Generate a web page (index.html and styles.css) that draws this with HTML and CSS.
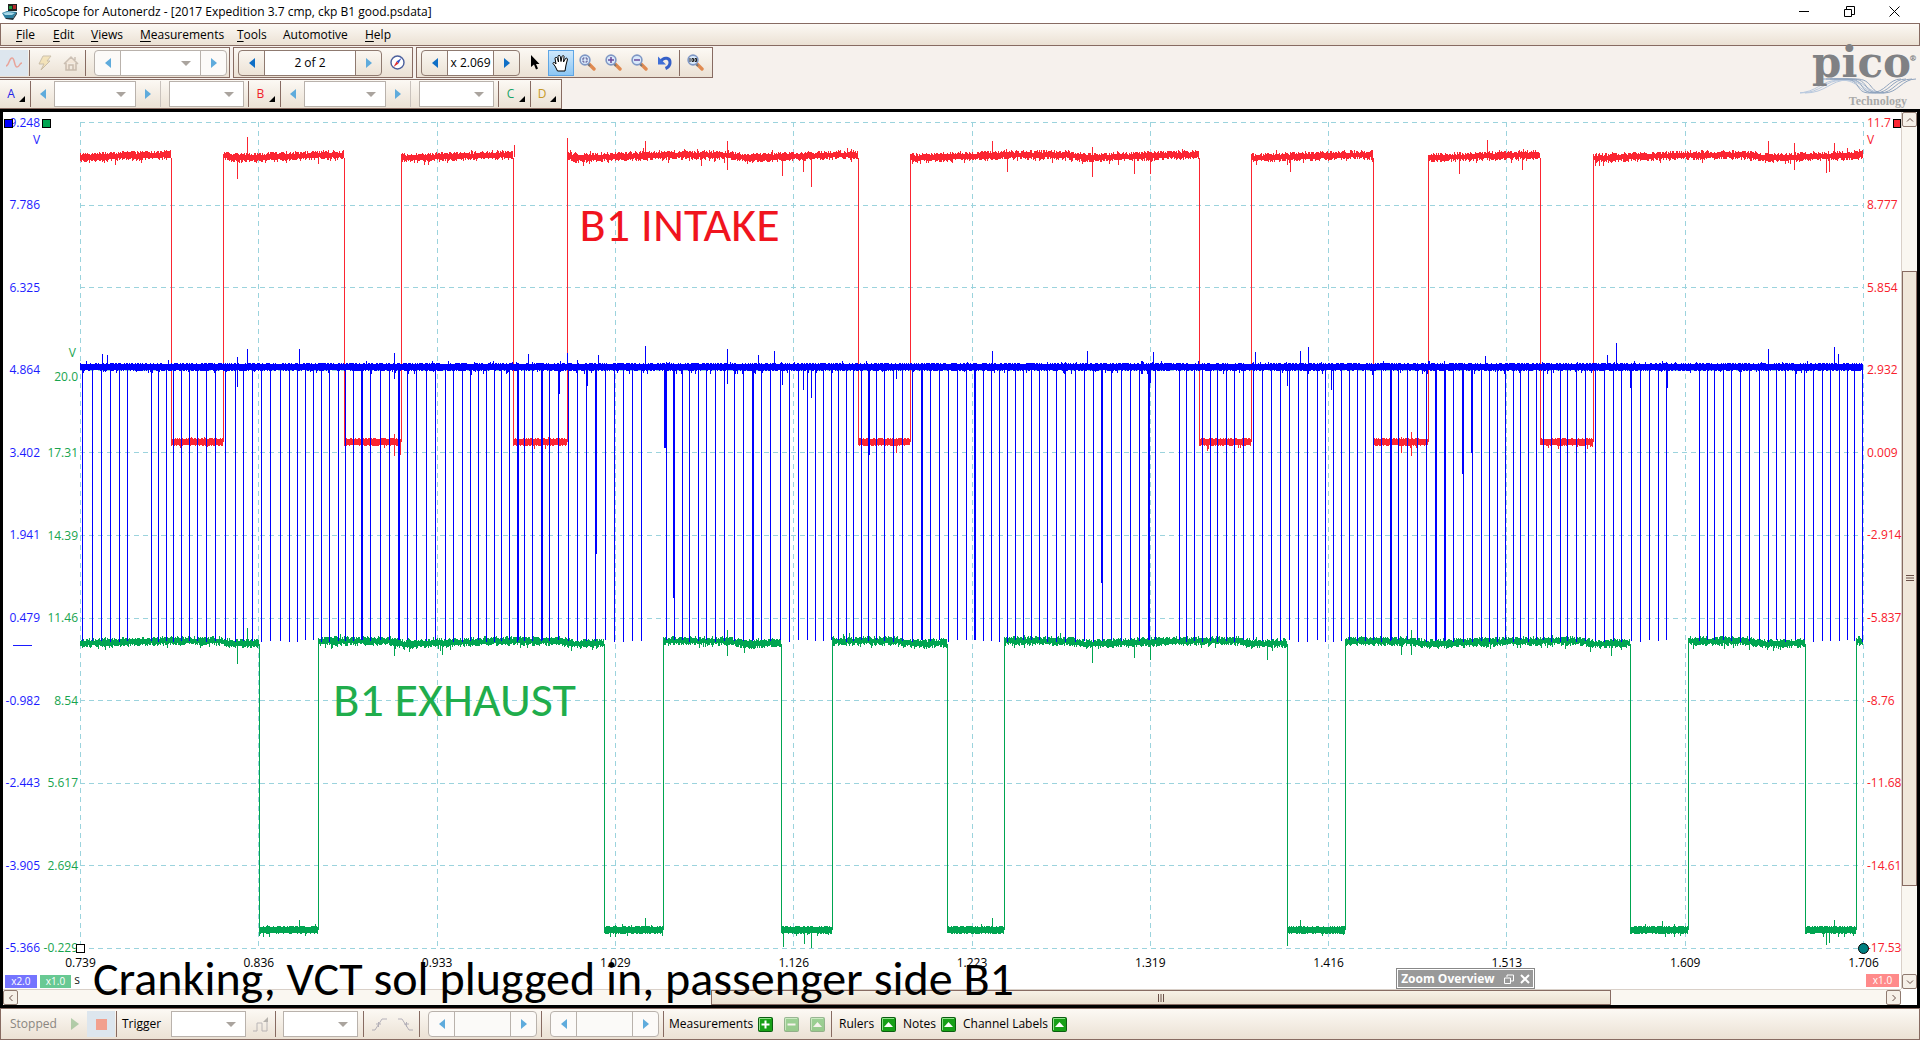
FILE: index.html
```html
<!DOCTYPE html>
<html lang="en">
<head>
<meta charset="utf-8">
<title>PicoScope for Autonerdz</title>
<link rel="stylesheet" href="styles.css">
</head>
<body>
<svg class="defs" aria-hidden="true">
  <symbol id="left" viewBox="0 0 6 10"><path d="M6 0V10L0 5Z" fill="currentColor"/></symbol>
  <symbol id="right" viewBox="0 0 6 10"><path d="M0 0V10L6 5Z" fill="currentColor"/></symbol>
  <symbol id="lens" viewBox="0 0 17 17"><path d="M9 9L15 15" stroke="#e08a50" stroke-width="3.4" stroke-linecap="round"/><path d="M8.500 9.500L11 12" stroke="#777" stroke-width="2"/><circle cx="6" cy="6" r="4.900" fill="#d9e9fb" stroke="#7f97c4" stroke-width="1.600"/></symbol>
  <symbol id="panel" viewBox="0 0 15 15"><rect x=".5" y=".5" width="14" height="14" rx="1" fill="#17a017" stroke="#0b5d10"/><path d="M1.500 13V1.500H13" fill="none" stroke="#8fe08a"/></symbol>
</svg>
<div class="window">
  <header class="titlebar">
    <svg class="app-icon" viewBox="0 0 16 17"><rect x="6" y="1" width="9" height="7" fill="#222"/><path d="M7 3h3v3H7z" fill="#1c9c3c"/><path d="M11 2h3v4h-3z" fill="#b32b2b"/><path d="M0 10L5 8L15 9L11 15L3 15Z" fill="#2d7f9f"/><path d="M1 10L6 9L13 10L10 12L3 12Z" fill="#a7d8e8"/><path d="M3 15L11 15L15 9V11L11 17L4 16Z" fill="#22333d"/></svg>
    <h1>PicoScope for Autonerdz - [2017 Expedition 3.7 cmp, ckp B1 good.psdata]</h1>
    <div class="win-buttons">
      <button aria-label="Minimize"><svg viewBox="0 0 11 11"><path d="M0 5.500H10"/></svg></button>
      <button aria-label="Restore"><svg viewBox="0 0 11 11"><path d="M.5 3.500H7.500V10.500H.5ZM2.500 3.500V.5H10.500V8.500H7.500"/></svg></button>
      <button aria-label="Close"><svg viewBox="0 0 11 11"><path d="M.5 .5L10.500 10.500M10.500 .5L.5 10.500"/></svg></button>
    </div>
  </header>

  <nav class="menu">
    <button class="m-file"><u>F</u>ile</button><button class="m-edit"><u>E</u>dit</button><button class="m-views"><u>V</u>iews</button><button class="m-meas"><u>M</u>easurements</button><button class="m-tools"><u>T</u>ools</button><button class="m-auto">Automotive</button><button class="m-help"><u>H</u>elp</button>
  </nav>

  <div class="toolbars">
    <div class="bars">
      <div class="bar-row">
        <div class="bar group-mode">
          <button class="tool lit" aria-label="Scope mode"><svg width="18" height="14" viewBox="0 0 18 14"><path d="M1 10C4 10 4 2 7 2S9 11 12 11S14 7 17 7" fill="none" stroke="#e8a49a" stroke-width="1.500"/></svg></button>
          <i class="sep"></i>
          <button class="tool faded" aria-label="Auto setup"><svg width="14" height="16" viewBox="0 0 14 16"><path d="M5 1H13L9 6H12L3 15L6 9H1Z" fill="#f2d27a" stroke="#8f7a50"/></svg></button>
          <button class="tool faded" aria-label="Home"><svg width="16" height="16" viewBox="0 0 16 16"><path d="M1 9L8 2L15 9M3 8V15H13V8M6 15V10H10V15M12 5V2" fill="#f3ddc8" stroke="#8f7a68" stroke-width="1.500"/></svg></button>
          <i class="sep"></i>
          <div class="stepper dim wide"><button aria-label="Previous range"><svg><use href="#left"/></svg></button><span class="drop"><select aria-label="Range" disabled></select></span><button aria-label="Next range"><svg><use href="#right"/></svg></button></div>
        </div>
        <div class="bar group-buffer">
          <div class="stepper buffer"><button aria-label="Previous buffer"><svg><use href="#left"/></svg></button><input aria-label="Buffer" value="2 of 2"><button class="pale" aria-label="Next buffer"><svg><use href="#right"/></svg></button></div>
          <button class="tool snug" aria-label="Buffer overview"><svg width="15" height="15" viewBox="0 0 15 15"><circle cx="7.500" cy="7.500" r="6.500" fill="#fff" stroke="#4b5f9c" stroke-width="1.400"/><path d="M11.500 3L8.500 8.500L6.500 6.500Z" fill="#3450c8"/><path d="M3.500 12L6.500 6.500L8.500 8.500Z" fill="#e03030"/></svg></button>
        </div>
        <div class="bar group-zoom">
          <div class="stepper zoom"><button aria-label="Zoom less"><svg><use href="#left"/></svg></button><input aria-label="Zoom factor" value="x 2.069"><button aria-label="Zoom more"><svg><use href="#right"/></svg></button></div>
          <button class="tool" aria-label="Select"><svg width="10" height="15" viewBox="0 0 10 15"><path d="M1 0V12L4 9.500L6 14.500L8 13.500L6 9H9.500Z"/></svg></button>
          <button class="tool picked" aria-label="Hand"><svg width="18" height="18" viewBox="0 0 18 18"><path d="M5.500 17L3 12L1 9.500C1 8 2.500 8 4 10L3 4.500C3 3 5 3 5.500 4.500L6.500 8L6 2.500C6 1 8 1 8.300 2.500L9 7.500L10 2.500C10.500 1 12.500 1.500 12 3L11.500 8L13.500 4.500C14.500 3.500 16 4.500 15.300 6L14 11L13 17Z" fill="#fff" stroke="#000"/></svg></button>
          <button class="tool" aria-label="Marquee zoom"><svg width="17" height="17" viewBox="0 0 17 17"><use href="#lens"/><path d="M4 6V4H5.500M6.500 4H8V6M8 6.500V8H6.500M5.500 8H4V6.500" fill="none" stroke="#57508a"/></svg></button>
          <button class="tool" aria-label="Zoom in"><svg width="17" height="17" viewBox="0 0 17 17"><use href="#lens"/><path d="M3 6H9M6 3V9" stroke="#6a4a9a" stroke-width="1.500"/></svg></button>
          <button class="tool" aria-label="Zoom out"><svg width="17" height="17" viewBox="0 0 17 17"><use href="#lens"/><path d="M3 6H9" stroke="#6a4a9a" stroke-width="1.500"/></svg></button>
          <button class="tool" aria-label="Undo zoom"><svg width="16" height="15" viewBox="0 0 16 15"><path d="M4 6C7 1.500 13.500 2.500 13 8C12.800 10.500 11 12.500 8.500 13.500" fill="none" stroke="#3560c8" stroke-width="3"/><path d="M1 1.500V9.500H9Z" fill="#3f6fd8"/></svg></button>
          <i class="sep"></i>
          <button class="tool" aria-label="Zoom full view"><svg width="17" height="17" viewBox="0 0 17 17"><use href="#lens"/><path d="M3 4V8M5 4.500h1.500v3H5zM8 4.500h1.500v3H8z" fill="none" stroke="#222"/></svg></button>
        </div>
      </div>
      <div class="bar-row">
        <div class="bar channels">
          <button class="chan a">A</button><i class="sep"></i>
          <div class="chan-step"><button aria-label="A range down"><svg><use href="#left"/></svg></button><span class="drop"><select aria-label="A range" disabled></select></span><button aria-label="A range up"><svg><use href="#right"/></svg></button></div>
          <span class="drop solo"><select aria-label="A coupling" disabled></select></span>
          <i class="sep"></i><button class="chan b">B</button><i class="sep"></i>
          <div class="chan-step"><button aria-label="B range down"><svg><use href="#left"/></svg></button><span class="drop"><select aria-label="B range" disabled></select></span><button aria-label="B range up"><svg><use href="#right"/></svg></button></div>
          <span class="drop solo"><select aria-label="B coupling" disabled></select></span>
          <i class="sep"></i><button class="chan c">C</button><i class="sep"></i><button class="chan d">D</button>
        </div>
      </div>
    </div>
    <div class="brand">
      <div class="brand-name">pico<sup>®</sup></div>
      <svg class="brand-wave" viewBox="0 0 116 17"><g fill="none" stroke-width="1"><g stroke="#b9c9de"><path d="M0 15C22 15 24 2 44 2S62 15 80 15"/><path d="M5 15C26 15 30 2 48 2S66 15 84 15"/><path d="M-4 15C18 15 20 2 40 2S58 15 76 15"/></g><g stroke="#8fa3bd"><path d="M30 1H52C70 1 62 15 80 15C94 15 96 1 112 1"/><path d="M26 1H48C66 1 58 15 75 15C90 15 92 1 106 1"/><path d="M34 1H56C74 1 68 15 84 15C98 15 102 1 116 1"/><path d="M22 1H44C62 1 54 15 70 15C86 15 88 1 101 1"/></g></g></svg>
      <div class="brand-sub">Technology</div>
    </div>
  </div>

  <main class="scope">
    <div class="view">
      <div class="axes">
        <ol class="axis blue"><li>9.248</li><li>7.786</li><li>6.325</li><li>4.864</li><li>3.402</li><li>1.941</li><li>0.479</li><li>-0.982</li><li>-2.443</li><li>-3.905</li><li>-5.366</li></ol>
        <div class="green-side">
          <div class="green-head"><span class="unit">V</span><span>20.0</span></div>
          <ol class="axis green"><li>17.31</li><li>14.39</li><li>11.46</li><li>8.54</li><li>5.617</li><li>2.694</li><li>-0.229</li></ol>
        </div>
        <span class="chip chip-blue"></span><span class="chip chip-green"></span>
        <span class="unit unit-blue">V</span><span class="zero-mark"></span>
      </div>
      <div class="chart">
        <svg id="traces" viewBox="80 122 1784 827" preserveAspectRatio="none" role="img" aria-label="Channel traces">
          <g id="grid"></g>
          <path id="intake" stroke="#fb2532"/>
          <path id="exhaust" stroke="#00a551"/>
          <path id="crank" stroke="#0000ff"/>
        </svg>
        <span class="handle-box"></span><span class="handle-dot"></span>
        <p class="note intake">B1 INTAKE</p>
        <p class="note exhaust">B1 EXHAUST</p>
        <p class="note caption">Cranking, VCT sol plugged in, passenger side B1</p>
      </div>
      <div class="axes-right">
        <ol class="axis red"><li>11.7</li><li>8.777</li><li>5.854</li><li>2.932</li><li>0.009</li><li>-2.914</li><li>-5.837</li><li>-8.76</li><li>-11.68</li><li>-14.61</li><li>-17.53</li></ol>
        <span class="chip chip-red"></span><span class="unit unit-red">V</span>
      </div>
      <div class="scales"><span class="scale blue-bg">x2.0</span><span class="scale green-bg">x1.0</span><span>s</span></div>
      <ol class="times"><li>0.739</li><li>0.836</li><li>0.933</li><li>1.029</li><li>1.126</li><li>1.223</li><li>1.319</li><li>1.416</li><li>1.513</li><li>1.609</li><li>1.706</li></ol>
      <div class="scales end"><span class="scale red-bg">x1.0</span></div>
      <div class="overview"><strong>Zoom Overview</strong>
        <button aria-label="Restore overview"><svg width="10" height="10" viewBox="0 0 10 10"><path d="M.5 4H6.500V9.500H.5ZM3 3V1H9.500V7H7" /></svg></button>
        <button aria-label="Close overview"><svg width="10" height="10" viewBox="0 0 10 10"><path d="M1 1L9 9M9 1L1 9" stroke-width="2"/></svg></button>
      </div>
    </div>
    <div class="scroll v">
      <button aria-label="Scroll up"><svg viewBox="0 0 8 8"><path d="M1 5.500L4 2.500L7 5.500"/></svg></button>
      <div class="track"><div class="thumb"><svg viewBox="0 0 8 8"><path d="M0 1.500H8M0 4H8M0 6.500H8"/></svg></div></div>
      <button aria-label="Scroll down"><svg viewBox="0 0 8 8"><path d="M1 2.500L4 5.500L7 2.500"/></svg></button>
    </div>
    <div class="scroll h">
      <button aria-label="Scroll left"><svg viewBox="0 0 8 8"><path d="M5.500 1L2.500 4L5.500 7"/></svg></button>
      <div class="track"><div class="thumb"><svg viewBox="0 0 8 8"><path d="M1.500 0V8M4 0V8M6.500 0V8"/></svg></div></div>
      <button aria-label="Scroll right"><svg viewBox="0 0 8 8"><path d="M2.500 1L5.500 4L2.500 7"/></svg></button>
    </div>
  </main>

  <footer class="bar status">
    <span class="state">Stopped</span>
    <button class="tool faded play" aria-label="Start"><svg width="8" height="12" viewBox="0 0 8 12"><path d="M0 0V12L8 6Z" fill="#4f9a4f"/></svg></button>
    <button class="tool lit" aria-label="Stop"><svg width="11" height="11" viewBox="0 0 11 11"><path d="M0 0H11V11H0Z" fill="#f2a08e"/></svg></button>
    <i class="sep"></i>
    <label class="trigger" for="trigger">Trigger</label>
    <span class="drop solo"><select id="trigger" disabled></select></span>
    <button class="tool faded" aria-label="Advanced trigger"><svg width="17" height="15" viewBox="0 0 17 15"><path d="M0 14H4V6H9V14H14V3" fill="none" stroke="#667"/><path d="M10 5L15 5V0Z" fill="#555"/></svg></button>
    <i class="sep"></i>
    <span class="drop solo"><select aria-label="Trigger channel" disabled></select></span>
    <i class="sep"></i>
    <button class="tool faded" aria-label="Rising edge"><svg width="15" height="13" viewBox="0 0 15 13"><path d="M0 12H3L10 1H15M4 6H9M6.500 4V9" fill="none" stroke="#557"/></svg></button>
    <button class="tool faded" aria-label="Falling edge"><svg width="15" height="13" viewBox="0 0 15 13"><path d="M0 1H4L11 12H15M6 6H11M8.500 4V9" fill="none" stroke="#557"/></svg></button>
    <i class="sep"></i>
    <div class="stepper dim low"><button aria-label="Threshold down"><svg><use href="#left"/></svg></button><input aria-label="Threshold" disabled><button aria-label="Threshold up"><svg><use href="#right"/></svg></button></div>
    <i class="sep"></i>
    <div class="stepper dim low"><button aria-label="Pre-trigger down"><svg><use href="#left"/></svg></button><input aria-label="Pre-trigger" disabled><button aria-label="Pre-trigger up"><svg><use href="#right"/></svg></button></div>
    <i class="sep"></i>
    <span class="lbl lbl-meas">Measurements</span>
    <button class="tool" aria-label="Add measurement"><svg width="15" height="15" viewBox="0 0 15 15"><use href="#panel"/><path d="M3.500 7.500H11.500M7.500 3.500V11.500" stroke="#fff" stroke-width="2"/></svg></button>
    <button class="tool faded" aria-label="Remove measurement"><svg width="15" height="15" viewBox="0 0 15 15"><use href="#panel"/><path d="M3.500 7.500H11.500" stroke="#fff" stroke-width="2"/></svg></button>
    <button class="tool faded" aria-label="Edit measurement"><svg width="15" height="15" viewBox="0 0 15 15"><use href="#panel"/><path d="M3 10L7.500 5L12 10Z" fill="#fff"/></svg></button>
    <i class="sep"></i>
    <span class="lbl lbl-rulers">Rulers</span><button class="tool tight" aria-label="Rulers"><svg width="15" height="15" viewBox="0 0 15 15"><use href="#panel"/><path d="M3 10L7.500 5L12 10Z" fill="#fff"/></svg></button>
    <span class="lbl lbl-notes">Notes</span><button class="tool tight" aria-label="Notes"><svg width="15" height="15" viewBox="0 0 15 15"><use href="#panel"/><path d="M3 10L7.500 5L12 10Z" fill="#fff"/></svg></button>
    <span class="lbl lbl-chan">Channel Labels</span><button class="tool tight" aria-label="Channel Labels"><svg width="15" height="15" viewBox="0 0 15 15"><use href="#panel"/><path d="M3 10L7.500 5L12 10Z" fill="#fff"/></svg></button>
  </footer>
</div>
<script src="traces.js"></script>
</body>
</html>
```

FILE: traces.js
```js
// Plot space: x 80..1864, y 122..949
const X0 = 80, X1 = 1863, Y0 = 122, Y1 = 948;
let seed = 20173;
const rnd = () => (seed = (seed * 16807) % 2147483647) / 2147483647;

// Small supply ripple: slow rise, then a quick drop with every compression
function ripple(x) {
  const p = ((x - 235 + 1700) % 170) / 170;
  return p < 0.55 ? -3 * p / 0.55 : p < 0.9 ? -3 : -3 * (1 - p) / 0.1;
}

function band(from, to, mid, half, spread, wobble) {
  let d = '';
  for (let x = Math.round(from); x < to; x++) {
    const c = mid + (wobble ? ripple(x) : 0);
    const long = rnd() < 0.08 ? rnd() * 4 : 0;
    const tall = rnd() < 0.04 ? rnd() * 3 : 0;
    d += `M${x}.5 ${Math.round(c - half - rnd() * spread - tall)}V${Math.round(c + half + rnd() * spread + long)}`;
  }
  return d;
}

function square(edges, high, low) {
  let d = '', x = X0, up = true;
  for (const e of [...edges, X1]) {
    d += up ? band(x, e, high, 2, 3, true) : band(x, e, low, 3, 1, false);
    if (e !== X1) d += `M${Math.floor(e)}.5 ${high}V${low}`;
    x = e; up = !up;
  }
  return d;
}

const spikes = list => list.map(([x, a, b]) => `M${x}.5 ${a}V${b}`).join('');

const intake = [171, 223, 344, 401, 513, 567, 858, 910, 1199, 1251, 1373, 1428, 1540, 1593];
const exhaust = [259, 318, 604, 663, 781, 832, 947, 1004, 1287, 1345, 1630, 1688, 1805, 1856];

const teeth = [82, 92, 101, 110, 119, 127, 151, 158, 166, 173, 181, 189, 197, 206, 215, 225, 235, 243, 252,
  261, 270, 280, 289, 297, 305, 313, 321, 329, 338, 345, 353, 361, 370, 380, 389, 398, 407, 416, 426, 435,
  445, 453, 462, 470, 478, 486, 494, 501, 509, 517, 524, 532, 541, 549, 558, 568, 577, 586, 595, 605, 614,
  623, 632, 641, 666, 674, 682, 689, 698, 706, 715, 724, 734, 743, 752, 761, 770, 780, 789, 798, 807, 815,
  823, 831, 838, 846, 853, 861, 868, 876, 884, 893, 902, 912, 921, 930, 939, 948, 957, 966, 974, 983, 991,
  999, 1007, 1015, 1023, 1031, 1039, 1047, 1056, 1065, 1075, 1084, 1093, 1102, 1111, 1121, 1130, 1139, 1148,
  1155, 1179, 1186, 1194, 1202, 1210, 1217, 1226, 1234, 1243, 1253, 1262, 1271, 1280, 1289, 1298, 1307,
  1317, 1325, 1333, 1341, 1349, 1357, 1365, 1373, 1381, 1390, 1398, 1407, 1417, 1426, 1435, 1444, 1453,
  1463, 1472, 1481, 1489, 1497, 1505, 1513, 1520, 1528, 1536, 1543, 1551, 1560, 1567, 1576, 1585, 1595,
  1604, 1613, 1621, 1631, 1640, 1649, 1658, 1666, 1699, 1707, 1714, 1723, 1731, 1740, 1749, 1759, 1768,
  1776, 1785, 1795, 1804, 1813, 1822, 1830, 1839, 1847, 1854, 1862];
const wide = [361, 398, 517, 541, 752, 921, 974, 1148, 1390, 1435, 1444];

document.getElementById('intake').setAttribute('d', square(intake, 158, 442) + spikes([
  [237, 157, 179], [247, 137, 157], [514, 145, 157], [567, 138, 157],
  [583, 157, 166], [645, 141, 157], [701, 157, 166], [727, 141, 170], [782, 157, 176], [803, 157, 172],
  [811, 157, 187], [992, 141, 157], [1007, 157, 172], [1092, 147, 177], [1134, 157, 174], [1150, 157, 174],
  [1290, 157, 172], [1459, 157, 174], [1487, 140, 157], [1522, 157, 170], [1768, 141, 157],
  [1794, 143, 170], [1826, 157, 173], [1829, 157, 172], [1834, 143, 157],
  [394, 434, 456], [400, 442, 455], [896, 442, 453], [1207, 442, 451], [1401, 442, 453], [1411, 432, 456]]));

document.getElementById('exhaust').setAttribute('d', square(exhaust, 644, 930) + spikes([
  [237, 644, 664], [247, 628, 644], [394, 644, 656], [442, 644, 655], [727, 630, 656], [744, 644, 653],
  [1092, 644, 663], [1134, 644, 658], [1150, 644, 660], [1267, 644, 660], [1401, 644, 655], [1411, 630, 655],
  [1611, 644, 656], [1795, 630, 644], [299, 920, 930], [645, 918, 930], [783, 930, 947], [804, 930, 944],
  [811, 930, 948], [992, 918, 930], [1287, 930, 946], [1300, 920, 930], [1662, 921, 930],
  [1826, 930, 945], [1829, 930, 943], [1834, 920, 930]]));

let crank = band(X0, X1, 367, 3, 1, false);
for (const x of teeth) {
  crank += `M${x}.5 367V${640 + Math.floor(rnd() * 3)}`;
  if (wide.includes(x)) crank += `M${x + 1}.5 367V640`;
}
crank += spikes([[596, 367, 554], [665, 367, 448], [664, 367, 448], [673, 367, 598], [869, 367, 455],
  [1101, 367, 583], [1462, 367, 474], [1471, 367, 453], [102, 354, 367], [107, 355, 367], [237, 357, 387],
  [247, 349, 367], [299, 349, 367], [394, 353, 379], [528, 354, 367], [559, 367, 394], [567, 353, 367],
  [587, 367, 386], [598, 355, 367], [645, 346, 367], [727, 349, 384], [758, 355, 367], [774, 351, 367],
  [782, 367, 385], [803, 367, 390], [811, 367, 398], [896, 367, 379], [992, 351, 367], [1087, 351, 367],
  [1150, 367, 383], [1153, 352, 367], [1255, 352, 367], [1287, 367, 386], [1300, 351, 367], [1308, 347, 367],
  [1331, 367, 390], [1485, 356, 367], [1607, 355, 367], [1616, 343, 367], [1630, 367, 388], [1667, 367, 388],
  [1768, 349, 367], [1834, 347, 367], [1838, 354, 367]]);
document.getElementById('crank').setAttribute('d', crank);

let grid = '';
for (let i = 0; i <= 10; i++) {
  const x = Math.round(X0 + i * (X1 - X0) / 10), y = Math.round(Y0 + i * (Y1 - Y0) / 10);
  grid += `<path d="M${x}.5 ${Y0}V${Y1}"/><path d="M${X0} ${y}.5H${X1}"/>`;
}
document.getElementById('grid').innerHTML = grid;
```

FILE: styles.css
```css
* { box-sizing: border-box; }
body { margin: 0; background: #fff; color: #000; font: 12px/16px "Open Sans", "Noto Sans", sans-serif; }
button, input, select { font: inherit; color: inherit; margin: 0; padding: 0; border: 0; background: none; border-radius: 0; appearance: none; min-width: 0; }
button { display: flex; align-items: center; justify-content: center; }
ol { list-style: none; margin: 0; padding: 0; }
p, h1 { margin: 0; font: inherit; }
.defs { position: absolute; width: 0; height: 0; }
.window { display: flex; flex-direction: column; height: 100vh; min-height: 600px; overflow: hidden; }

.titlebar { display: flex; align-items: center; height: 23px; padding-left: 2px; flex: none; }
.app-icon { width: 16px; height: 17px; margin-right: 5px; }
.titlebar h1 { flex: 1; }
.win-buttons { display: flex; padding-right: 3px; }
.win-buttons button { width: 45px; height: 22px; }
.win-buttons svg { width: 11px; height: 11px; fill: none; stroke: #000; }

.menu, .bar { background: linear-gradient(#fcf9f4, #ebe1d4); }
.menu { display: flex; height: 23px; flex: none; border: 1px solid #876b62; padding-left: 15px; }
.menu button { justify-content: flex-start; white-space: nowrap; text-underline-offset: 2px; }
.m-file { width: 37px; }
.m-edit { width: 38px; }
.m-views { width: 49px; }
.m-meas { width: 97px; }
.m-tools { width: 46px; }
.m-auto { width: 82px; }

.toolbars { display: flex; justify-content: space-between; height: 63px; flex: none; background: #f6f1ed; }
.bars { display: flex; flex-direction: column; gap: 1px; padding-top: 1px; }
.bar-row { display: flex; gap: 3px; }
.bar { display: flex; align-items: center; height: 31px; border: 1px solid #876b62; }
.bar-row + .bar-row .bar { height: 30px; border-left: 0; }
.group-mode { width: 230px; border-left: 0; }
.group-buffer { width: 180px; padding-left: 4px; }
.group-zoom { width: 297px; padding-left: 4px; }
.sep { width: 1px; height: 26px; background: #876b62; flex: none; margin: 0 2px 0 1px; }
.tool { width: 26px; height: 26px; flex: none; }
.tool.lit { width: 28px; background: #dde6ee; }
.tool.picked { background: linear-gradient(#cfe8fb, #8cc6f4); border: 1px solid #5ea5e4; }
.tool.snug { width: 30px; }
.tool.tight { width: 15px; margin: 0 7px 0 0; }
.faded { opacity: .4; }
.stepper { display: flex; height: 26px; border: 1px solid #8f7a70; border-radius: 4px; overflow: hidden; flex: none; }
.stepper button { width: 25px; color: #0f6fc6; flex: none; }
.stepper svg, .chan-step svg { width: 6px; height: 10px; }
.stepper input { flex: 1; width: 0; text-align: center; background: #fff; border: solid #8f7a70; border-width: 0 1px; }
.stepper .drop { flex: 1; border-width: 0 1px; height: 24px; }
.stepper.dim { border-color: #b9b2ac; background: #fcfaf8; }
.stepper.dim input { background: #fbfaf8; border-color: #b9b2ac; }
.dim button, .stepper .pale, .chan-step button { color: #5fabdc; }
.wide { width: 133px; margin-left: 6px; }
.buffer { width: 144px; }
.zoom { width: 99px; margin-right: 2px; }
.low { width: 109px; margin: 0 3px 0 6px; }
.drop { position: relative; display: block; height: 26px; border: 1px solid #b9b2ac; background: #fff; flex: none; }
.drop select { width: 100%; height: 100%; display: block; opacity: 1; }
.drop::after { content: ""; position: absolute; right: 9px; top: 50%; margin-top: -2px; border: 5px solid transparent; border-top-color: #aaa49e; border-bottom: 0; }
.drop.solo { width: 75px; }
.channels { width: 562px; }
.channels .sep { margin: 0; }
.chan { width: 30px; height: 28px; padding-right: 8px; position: relative; }
.chan::after { content: ""; position: absolute; right: 5px; bottom: 6px; border: solid transparent; border-width: 3px; border-right-color: #000; border-bottom-color: #000; }
.a { color: #2323e8; } .b { color: #f01c28; width: 31px; } .c { color: #18a468; width: 31px; } .d { color: #c79a28; }
.chan-step { display: flex; width: 130px; height: 26px; margin-right: 8px; border-right: 1px solid #c9c2bc; }
.chan-step button { width: 23px; flex: none; }
.chan-step .drop { width: 82px; }
.channels .solo { margin-right: 4px; }

.brand { width: 120px; margin-right: 4px; display: flex; flex-direction: column; align-items: flex-end; color: #808184; font-family: "DejaVu Serif", serif; }
.brand-name { font-size: 42px; font-weight: bold; line-height: 34px; height: 32px; position: relative; margin-right: 5px; }
.brand-name sup { position: absolute; right: -6px; top: 8px; font-size: 8px; line-height: 8px; }
.brand-wave { width: 116px; height: 17px; overflow: hidden; }
.brand-sub { font: bold 12px/12px "Liberation Serif", serif; color: #a9a9a9; margin-right: 9px; }

.scope { flex: 1; min-height: 0; display: grid; grid-template: minmax(0, 1fr) 16px / minmax(0, 1fr) 16px; border: 3px solid #000; background: #fff; }
.view { position: relative; display: grid; grid-template: minmax(0, 1fr) 40px / 77px minmax(0, 1fr) 37px; padding-top: 10px; }
.axes, .axes-right, .chart { position: relative; }
.axes { display: flex; }
.axis { display: flex; flex-direction: column; justify-content: space-between; }
.axis li { height: 1px; display: flex; align-items: center; justify-content: flex-end; white-space: nowrap; }
.blue { width: 37px; color: #1c1cff; }
.green-side { width: 38px; display: flex; flex-direction: column; color: #18a44e; text-align: right; }
.green-head { height: 40%; display: flex; flex-direction: column; justify-content: flex-end; gap: 8px; padding-bottom: 68px; }
.green-head .unit { padding-right: 2px; }
.green { height: 60%; }
.red { height: 100%; color: #f8202c; padding-left: 3px; }
.red li { justify-content: flex-start; }
.unit-blue, .unit-red { position: absolute; top: 10px; }
.unit-blue { left: 30px; color: #1c1cff; }
.unit-red { left: 3px; color: #f8202c; }
.chip { position: absolute; top: -3px; width: 9px; height: 9px; border: 1px solid #000; }
.chip-blue { left: 1px; background: #00f; }
.chip-green { left: 39px; background: #00a551; }
.chip-red { right: 0; width: 8px; background: #fb2532; }
.zero-mark { position: absolute; left: 10px; top: 63.2%; width: 19px; height: 1px; background: #1c1cff; }
.chart svg { display: block; position: absolute; inset: 0; width: 100%; height: 100%; fill: none; }
.chart path { stroke-width: 1; }
#grid path { stroke: #9bd3dd; stroke-dasharray: 5 4; }
.handle-box { position: absolute; left: -4px; bottom: -4px; width: 9px; height: 9px; border: 1px solid #000; background: #fff; }
.handle-dot { position: absolute; right: -5px; bottom: -5px; width: 11px; height: 11px; border: 1px solid #000; border-radius: 50%; background: #008080; z-index: 2; }
.note { position: absolute; font: 48px/48px Carlito, Calibri, Lato, sans-serif; white-space: nowrap; }
.note.intake { left: 28%; top: 9.5%; color: #f0141e; }
.note.exhaust { left: 14.2%; top: 67%; color: #20ad4c; }
.note.caption { left: 13px; bottom: -54px; z-index: 2; }
.times { display: flex; justify-content: space-between; padding-top: 6px; }
.times li { width: 1px; display: flex; justify-content: center; }
.scales { display: flex; align-items: flex-end; gap: 3px; padding: 0 0 1px 2px; color: #222; }
.scale { width: 35px; height: 13px; font-size: 10px; line-height: 13px; text-align: center; color: #fff; }
.blue-bg { background: #7474ff; } .green-bg { background: #68c993; } .red-bg { background: #ff8a8a; width: 33px; }
.scales.end { padding: 0 2px 2px 0; justify-content: flex-end; }
.overview { position: absolute; left: 73.4%; bottom: 0; width: 139px; height: 21px; display: flex; align-items: center; gap: 6px; padding: 0 4px; background: #999; border: 1px solid #888; box-shadow: inset 0 0 0 1px #fff; color: #fff; z-index: 3; }
.overview strong { flex: 1; white-space: nowrap; font-size: 12px; }
.overview svg { fill: none; stroke: #fff; stroke-width: 1; }

.scroll { display: flex; background: #faf7f1; }
.scroll.v { flex-direction: column; border-left: 1px solid #d9d0c8; }
.scroll.h { border-top: 1px solid #d9d0c8; }
.scroll button { width: 15px; height: 15px; border: 1px solid #8f7a70; border-radius: 2px; background: #f6f0e8; flex: none; }
.scroll svg { width: 8px; height: 8px; fill: none; stroke: #6a5048; }
.track { flex: 1; position: relative; display: flex; }
.v .track { flex-direction: column; }
.thumb { background: #f0e7da; border: 1px solid #876b62; display: flex; align-items: center; justify-content: center; }
.v .thumb { height: 72.6%; margin-top: 144px; }
.h .thumb { width: 48.2%; margin-left: 37.1%; background: linear-gradient(#f7f1e6, #e9dfd0); }

.status { height: 32px; flex: none; padding-left: 9px; }
.state { width: 53px; color: #8a8680; }
.status .play { width: 24px; }
.trigger { width: 47px; padding-left: 3px; }
.status .solo { margin: 0 2px 0 5px; }
.status .solo + .sep { margin-left: 3px; }
.lbl { white-space: nowrap; }
.lbl-meas { width: 86px; padding-left: 3px; }
.lbl-rulers { width: 47px; padding-left: 5px; }
.lbl-notes { width: 38px; }
.lbl-chan { width: 89px; }
```
